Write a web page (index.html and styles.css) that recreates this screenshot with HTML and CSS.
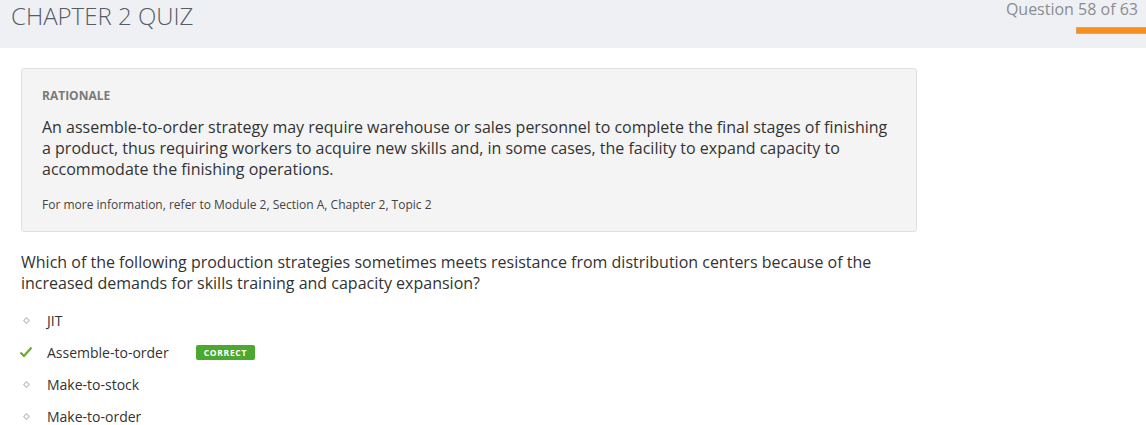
FILE: index.html
```html
<!DOCTYPE html>
<html>
<head>
<meta charset="utf-8">
<link rel="stylesheet" href="styles.css">
</head>
<body>
<header class="top">
  <h1 class="title">CHAPTER 2 QUIZ</h1>
  <div class="progress">
    <div class="count">Question 58 of 63</div>
    <div class="bar"></div>
  </div>
</header>
<main class="content">
  <section class="rationale">
    <div class="label">RATIONALE</div>
    <p class="body">An assemble-to-order strategy may require warehouse or sales personnel to complete the final stages of finishing a product, thus requiring workers to acquire new skills and, in some cases, the facility to expand capacity to accommodate the finishing operations.</p>
    <p class="ref">For more information, refer to Module 2, Section A, Chapter 2, Topic 2</p>
  </section>
  <p class="question">Which of the following production strategies sometimes meets resistance from distribution centers because of the increased demands for skills training and capacity expansion?</p>
  <ul class="options">
    <li class="opt"><span class="mark"><span class="dot"></span></span><span>JIT</span></li>
    <li class="opt"><span class="mark"><svg width="14" height="12" viewBox="0 0 14 12"><path d="M1.5 6.5 L5 10 L12.5 1.5" fill="none" stroke="#6aab2e" stroke-width="2.2"/></svg></span><span>Assemble-to-order</span><span class="badge">CORRECT</span></li>
    <li class="opt"><span class="mark"><span class="dot"></span></span><span>Make-to-stock</span></li>
    <li class="opt"><span class="mark"><span class="dot"></span></span><span>Make-to-order</span></li>
  </ul>
</main>
</body>
</html>
```
FILE: styles.css
```css
* { box-sizing: border-box; }
html, body { margin: 0; padding: 0; }
body {
  font-family: "Open Sans", "Liberation Sans", sans-serif;
  color: #333;
  background: #fff;
}
.top {
  background: #eff0f4;
  height: 48px;
  display: flex;
  justify-content: space-between;
  align-items: flex-start;
}
.title {
  margin: 0;
  padding: 0 0 0 11px;
  font-size: 24px;
  font-weight: 300;
  line-height: 32px;
  color: #555c66;
}
.progress {
  display: flex;
  flex-direction: column;
  align-items: flex-end;
}
.count {
  font-size: 16px;
  line-height: 18px;
  color: #8a8d92;
  padding-right: 8px;
}
.bar {
  margin-top: 9px;
  width: 70px;
  height: 7px;
  background: #f68f1e;
  border: 1px solid #e9a45a;
  border-right: none;
}
.content {
  padding: 20px 0 0 21px;
}
.rationale {
  width: 896px;
  background: #f4f4f4;
  border: 1px solid #e0e0e0;
  border-radius: 3px;
  padding: 19px 20px 18px 20px;
}
.label {
  font-size: 12px;
  font-weight: 700;
  color: #7a7a7a;
  line-height: 16px;
}
.body {
  margin: 13px 0 0 0;
  font-size: 16px;
  line-height: 21px;
  color: #333;
}
.ref {
  margin: 17px 0 0 0;
  font-size: 12px;
  line-height: 16px;
  color: #444;
}
.question {
  margin: 20px 0 0 0;
  width: 880px;
  font-size: 16px;
  line-height: 21px;
  color: #333;
}
.options {
  list-style: none;
  margin: 10px 0 0 0;
  padding: 0;
}
.opt {
  display: flex;
  align-items: center;
  height: 32px;
  font-size: 14px;
  color: #333;
}
.mark {
  width: 26px;
  display: flex;
  justify-content: center;
  align-items: center;
  margin-left: -8px;
  margin-right: 8px;
}
.dot {
  width: 5px;
  height: 5px;
  border: 1px solid #bbb;
  transform: rotate(45deg);
}
.badge {
  margin-left: 27px;
  background: #4ca82e;
  color: #fff;
  font-size: 8.5px;
  font-weight: 700;
  letter-spacing: 0.7px;
  line-height: 15px;
  padding: 0 8px;
  border-radius: 2px;
}
```
